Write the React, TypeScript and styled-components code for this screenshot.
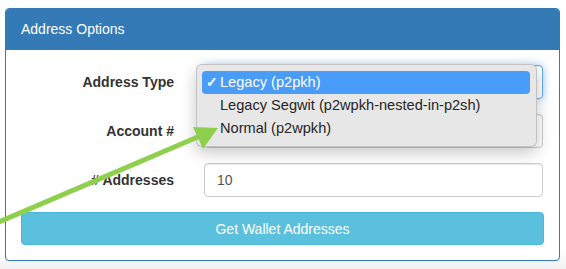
import React from 'react'
import styled, { createGlobalStyle } from 'styled-components'

const GlobalStyle = createGlobalStyle`
  html, body {
    margin: 0;
    padding: 0;
    background: #fff;
    font-family: "Liberation Sans", Arial, Helvetica, sans-serif;
    font-size: 14px;
    color: #333;
  }
  * { box-sizing: border-box; }
`

const Page = styled.div`
  position: relative;
  width: 566px;
  height: 269px;
  padding: 8px 6px 0 5px;
  overflow: hidden;
  background: linear-gradient(to bottom, #fff 0, #fff 250px, #f1f1f1 269px);
`

const Panel = styled.div`
  border: 1px solid #337ab7;
  border-radius: 4px;
  background: #fff;
  box-shadow: 0 1px 1px rgba(0, 0, 0, 0.05);
`

const Heading = styled.div`
  background: #337ab7;
  color: #fff;
  padding: 10px 15px;
  line-height: 20px;
  font-size: 14px;
  border-bottom: 1px solid #337ab7;
  border-radius: 3px 3px 0 0;
`

const Body = styled.div`
  padding: 15px;
  display: flex;
  flex-direction: column;
  gap: 15px;
`

const Row = styled.div`
  display: grid;
  grid-template-columns: 153px 1fr;
  column-gap: 30px;
  align-items: center;
`

const Label = styled.label`
  text-align: right;
  font-weight: bold;
  font-size: 14px;
  color: #333;
`

const Field = styled.div`
  position: relative;
  margin-right: 1px;
`

const Input = styled.div<{ $focus?: boolean }>`
  height: 34px;
  padding: 6px 12px;
  line-height: 20px;
  font-size: 14px;
  color: #555;
  background: #fff;
  border: 1px solid ${p => (p.$focus ? '#66afe9' : '#ccc')};
  border-radius: 4px;
  box-shadow: ${p =>
    p.$focus
      ? 'inset 0 1px 1px rgba(0,0,0,.075), 0 0 8px rgba(102,175,233,.6)'
      : 'inset 0 1px 1px rgba(0,0,0,.075)'};
  display: flex;
  align-items: center;
  justify-content: space-between;
`

const Chevron = styled.svg`
  margin-right: -8px;
`

const Menu = styled.div`
  position: absolute;
  left: -8px;
  top: -1px;
  width: 341px;
  padding: 6px 6px 6px 5px;
  background: #e7e7e7;
  border: 1px solid rgba(0, 0, 0, 0.16);
  border-radius: 6px;
  box-shadow: 0 6px 16px rgba(0, 0, 0, 0.22);
  z-index: 2;
`

const Item = styled.div<{ $active?: boolean }>`
  height: 23px;
  line-height: 23px;
  font-size: 14.6px;
  padding-left: 18px;
  position: relative;
  border-radius: 4px;
  color: ${p => (p.$active ? '#fff' : '#262626')};
  background: ${p => (p.$active ? '#4a9cf9' : 'transparent')};
  white-space: nowrap;
`

const Check = styled.span`
  position: absolute;
  left: 4px;
  top: 0;
  font-size: 14px;
  font-weight: bold;
`

const Button = styled.button`
  display: block;
  width: 100%;
  height: 33px;
  background: #5bc0de;
  border: 1px solid #46b8da;
  border-radius: 4px;
  color: #fff;
  font-family: inherit;
  font-size: 14px;
  line-height: 20px;
`

const ArrowLayer = styled.svg`
  position: absolute;
  left: 0;
  top: 0;
  pointer-events: none;
  z-index: 3;
`

const options = [
  'Legacy (p2pkh)',
  'Legacy Segwit (p2wpkh-nested-in-p2sh)',
  'Normal (p2wpkh)',
]

const App = () => {
  const [selected] = React.useState(0)

  return (
    <Page>
      <GlobalStyle />
      <Panel>
        <Heading>Address Options</Heading>
        <Body>
          <Row>
            <Label>Address Type</Label>
            <Field>
              <Input $focus>
                <span />
                <Chevron width="8" height="6" viewBox="0 0 8 6">
                  <path d="M1 1.5 L4 4.5 L7 1.5" fill="none" stroke="#444" strokeWidth="1.3" />
                </Chevron>
              </Input>
              <Menu>
                {options.map((o, i) => (
                  <Item key={o} $active={i === selected}>
                    {i === selected && <Check>✓</Check>}
                    {o}
                  </Item>
                ))}
              </Menu>
            </Field>
          </Row>
          <Row>
            <Label>Account #</Label>
            <Field>
              <Input />
            </Field>
          </Row>
          <Row>
            <Label># Addresses</Label>
            <Field>
              <Input>10</Input>
            </Field>
          </Row>
          <Button>Get Wallet Addresses</Button>
        </Body>
      </Panel>

      <ArrowLayer width="566" height="269" viewBox="0 0 566 269">
        <line x1="-6" y1="224" x2="200" y2="136" stroke="#8ed04e" strokeWidth="5" />
        <polygon points="218,128 193,127 203,149" fill="#8ed04e" />
      </ArrowLayer>
    </Page>
  )
}

export default App
